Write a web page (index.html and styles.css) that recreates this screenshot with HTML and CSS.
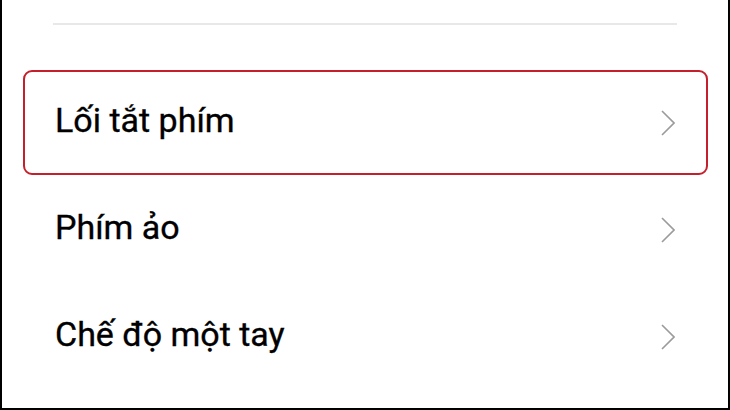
FILE: index.html
```html
<!DOCTYPE html>
<html lang="vi">
<head>
  <meta charset="UTF-8">
  <title>Cài đặt bàn phím</title>
  <meta name="viewport" content="width=device-width, initial-scale=1">
  <link rel="stylesheet" href="styles.css">
</head>
<body>
  <div class="screen">
    <div class="divider"></div>
    <div class="list">
      <div class="row active">
        <span class="label">Lối tắt phím</span>
        <svg class="chevron" viewBox="0 0 14 26"><polyline points="1,1 13,13 1,25"/></svg>
      </div>
      <div class="row">
        <span class="label">Phím ảo</span>
        <svg class="chevron" viewBox="0 0 14 26"><polyline points="1,1 13,13 1,25"/></svg>
      </div>
      <div class="row">
        <span class="label">Chế độ một tay</span>
        <svg class="chevron" viewBox="0 0 14 26"><polyline points="1,1 13,13 1,25"/></svg>
      </div>
    </div>
  </div>
</body>
</html>
```

FILE: styles.css
```css
body { margin:0; padding:0; background:#fff; font-family: Roboto, "Noto Sans", Arial, sans-serif; }
.screen { width:730px; height:410px; box-sizing:border-box; background:#fff; border-left:2px solid #000; border-right:2px solid #000; border-bottom:2px solid #000; padding-top:23px; }
.divider { height:2px; background:#e8e8e8; margin:0 51px; }
.list { display:flex; flex-direction:column; gap:2px; margin-top:45px; }
.row { height:105px; box-sizing:border-box; margin:0 20px 0 21px; padding:0 31px 0 30px; border:2.5px solid transparent; border-radius:9px; display:flex; align-items:center; justify-content:space-between; }
.row.active { border-color:#c61f2c; }
.label { font-size:34px; color:#000; -webkit-text-stroke:0.35px #000; margin-bottom:5px; }
.chevron { width:14px; height:26px; }
.chevron polyline { fill:none; stroke:#9b9b9b; stroke-width:1.6; }
```
